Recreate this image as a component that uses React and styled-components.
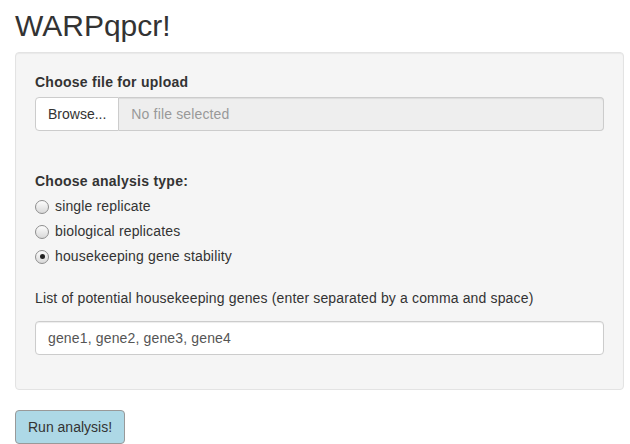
import React from "react";
import styled, { createGlobalStyle } from "styled-components";

const Global = createGlobalStyle`
  html, body { margin: 0; padding: 0; background: #fff; }
  body {
    font-family: "Liberation Sans", Arial, sans-serif;
    font-size: 14px;
    line-height: 20px;
    color: #333;
    letter-spacing: 0.15px;
  }
  * { box-sizing: border-box; }
`;

const Page = styled.div`
  padding: 9px 6px 0 15px;
  width: 630px;
`;

const Title = styled.h2`
  margin: 0 0 10px 0;
  font-size: 30px;
  line-height: 33px;
  font-weight: 500;
  color: #333;
  letter-spacing: 0;
`;

const Well = styled.div`
  background: #f5f5f5;
  border: 1px solid #e3e3e3;
  border-radius: 4px;
  box-shadow: inset 0 1px 1px rgba(0, 0, 0, 0.05);
  padding: 19px;
  min-height: 20px;
`;

const FormGroup = styled.div`
  margin-bottom: ${(p) => p.$mb ?? 15}px;
`;

const Label = styled.label`
  display: block;
  font-weight: ${(p) => (p.$normal ? 400 : 700)};
  letter-spacing: ${(p) => (p.$normal ? 0.15 : 0.25)}px;
  margin-bottom: ${(p) => p.$mb ?? 5}px;
  line-height: 20px;
`;

const InputGroup = styled.div`
  display: flex;
  height: 34px;
`;

const BrowseBtn = styled.span`
  display: flex;
  align-items: center;
  padding: 0 12px;
  background: #fff;
  border: 1px solid #ccc;
  border-radius: 4px 0 0 4px;
  color: #333;
  letter-spacing: 0;
`;

const FileName = styled.div`
  flex: 1;
  display: flex;
  align-items: center;
  padding: 0 12px;
  background: #eee;
  border: 1px solid #ccc;
  border-left: none;
  border-radius: 0 4px 4px 0;
  color: #999;
  box-shadow: inset 0 1px 1px rgba(0, 0, 0, 0.075);
`;

const Options = styled.div`
  display: flex;
  flex-direction: column;
  gap: 5px;
`;

const RadioRow = styled.label`
  display: flex;
  align-items: center;
  height: 20px;
  cursor: pointer;
`;

const Circle = styled.span`
  width: 14px;
  height: 14px;
  margin: 1px 6px 0 0;
  border-radius: 50%;
  border: 1px solid #8e8e8e;
  background: linear-gradient(#fdfdfd, #d8d8d8);
  display: flex;
  align-items: center;
  justify-content: center;
  &::after {
    content: "";
    width: 5px;
    height: 5px;
    border-radius: 50%;
    background: ${(p) => (p.$checked ? "#222" : "transparent")};
  }
`;

const TextInput = styled.div`
  height: 34px;
  display: flex;
  align-items: center;
  padding: 0 12px;
  background: #fff;
  border: 1px solid #ccc;
  border-radius: 4px;
  box-shadow: inset 0 1px 1px rgba(0, 0, 0, 0.075);
  color: #555;
`;

const RunButton = styled.button`
  margin-top: 20px;
  height: 34px;
  padding: 0 12px;
  font-family: inherit;
  font-size: 14px;
  letter-spacing: 0;
  color: #333;
  background: #add8e6;
  border: 1px solid #999;
  border-radius: 4px;
  cursor: pointer;
`;

const options = [
  { label: "single replicate", checked: false },
  { label: "biological replicates", checked: false },
  { label: "housekeeping gene stability", checked: true },
];

export default function App() {
  return (
    <>
      <Global />
      <Page>
        <Title>WARPqpcr!</Title>
        <Well>
          <FormGroup $mb={40}>
            <Label>Choose file for upload</Label>
            <InputGroup>
              <BrowseBtn>Browse...</BrowseBtn>
              <FileName>No file selected</FileName>
            </InputGroup>
          </FormGroup>
          <FormGroup $mb={22}>
            <Label>Choose analysis type:</Label>
            <Options>
              {options.map((o) => (
                <RadioRow key={o.label}>
                  <Circle $checked={o.checked} />
                  {o.label}
                </RadioRow>
              ))}
            </Options>
          </FormGroup>
          <FormGroup>
            <Label $normal $mb={13}>
              List of potential housekeeping genes (enter separated by a comma and space)
            </Label>
            <TextInput>gene1, gene2, gene3, gene4</TextInput>
          </FormGroup>
        </Well>
        <RunButton>Run analysis!</RunButton>
      </Page>
    </>
  );
}
